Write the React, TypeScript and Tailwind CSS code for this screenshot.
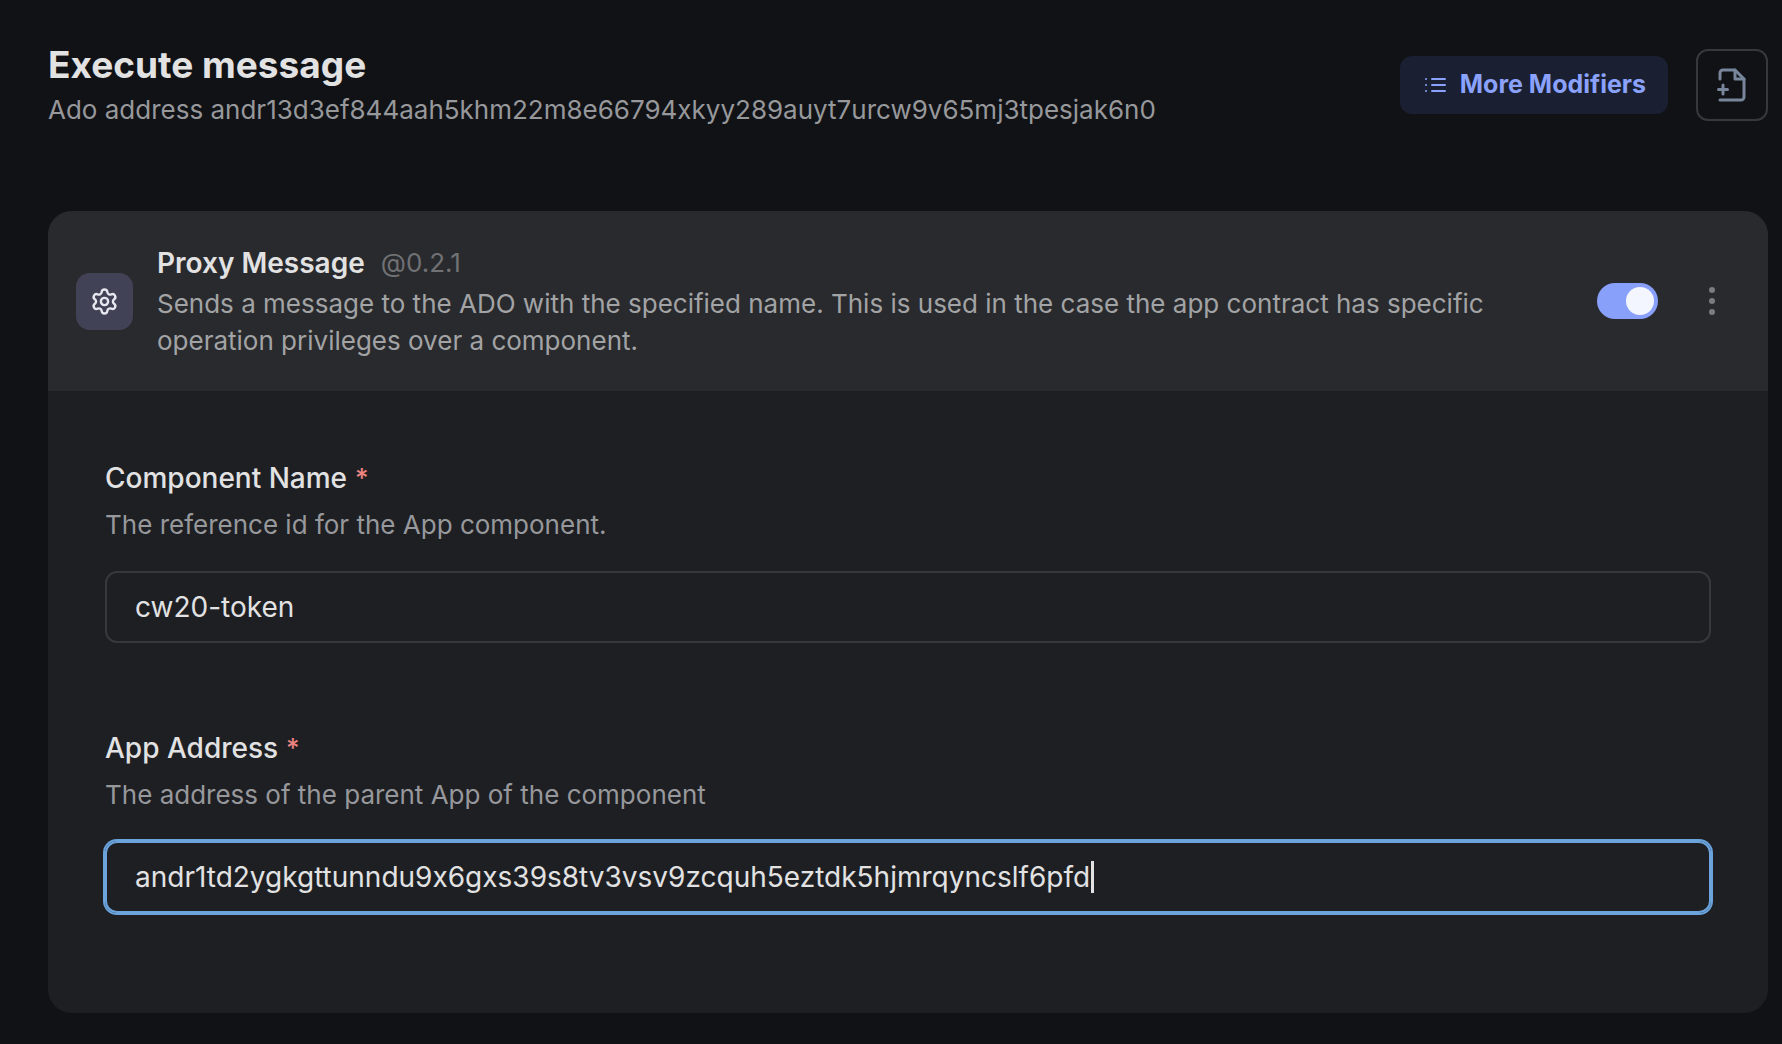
import React, { useEffect, useRef, useState } from "react";

const GearIcon = () => (
  <svg className="size-[29px]" viewBox="0 0 24 24" fill="none" stroke="currentColor" strokeWidth="2" strokeLinecap="round" strokeLinejoin="round" aria-hidden="true">
    <path d="M9.67 4.14a2.34 2.34 0 0 1 4.66 0 2.34 2.34 0 0 0 3.32 1.92 2.34 2.34 0 0 1 2.33 4.03 2.34 2.34 0 0 0 0 3.83 2.34 2.34 0 0 1-2.33 4.03 2.34 2.34 0 0 0-3.32 1.92 2.34 2.34 0 0 1-4.66 0 2.34 2.34 0 0 0-3.32-1.92 2.34 2.34 0 0 1-2.33-4.03 2.34 2.34 0 0 0 0-3.83 2.34 2.34 0 0 1 2.33-4.03 2.34 2.34 0 0 0 3.32-1.92" />
    <circle cx="12" cy="12" r="3" />
  </svg>
);

const FilePlusIcon = () => (
  <svg className="size-9" viewBox="0 0 24 24" fill="none" stroke="currentColor" strokeWidth="2" strokeLinecap="round" strokeLinejoin="round" aria-hidden="true">
    <path d="M4 22h14a2 2 0 0 0 2-2V8l-6-6H6a2 2 0 0 0-2 2v4" />
    <path d="M14 2v6h6" />
    <path d="M3 15h6M6 12v6" />
  </svg>
);

const ListIcon = () => (
  <svg className="size-6" viewBox="0 0 24 24" fill="none" stroke="currentColor" strokeWidth="2" strokeLinecap="round" aria-hidden="true">
    <path d="M10 6h13M10 12h13M10 18h13M4 6h.01M4 12h.01M4 18h.01" />
  </svg>
);

type FieldProps = {
  id: string;
  label: string;
  hint: string;
  initial: string;
  focused?: boolean;
};

function Field({ id, label, hint, initial, focused = false }: FieldProps) {
  const [value, setValue] = useState(initial);
  const [active, setActive] = useState(focused);
  const [caretX, setCaretX] = useState(0);
  const ref = useRef<HTMLInputElement>(null);

  const placeCaret = () => {
    const input = ref.current;
    const ctx = document.createElement("canvas").getContext("2d");
    if (!input || !ctx) return;
    const style = getComputedStyle(input);
    ctx.font = `${style.fontWeight} ${style.fontSize} ${style.fontFamily}`;
    const before = input.value.slice(0, input.selectionEnd ?? input.value.length);
    setCaretX(Math.round(ctx.measureText(before).width + parseFloat(style.paddingLeft) - input.scrollLeft));
  };

  useEffect(() => {
    if (focused && ref.current) {
      ref.current.focus();
      ref.current.setSelectionRange(initial.length, initial.length);
      placeCaret();
    }
  }, [focused, initial]);

  return (
    <div>
      <label htmlFor={id} className="flex gap-2 text-[28px] leading-9 font-medium text-[#e2e2e3]">
        {label}
        <span className="text-[26px] text-[#ee8481]">*</span>
      </label>
      <p id={`${id}-hint`} className="mt-[11px] text-[26px] leading-9 text-[#97989b]">{hint}</p>
      <div className="relative mt-7">
        <input
          id={id}
          ref={ref}
          type="text"
          required
          spellCheck={false}
          aria-describedby={`${id}-hint`}
          value={value}
          onChange={(e) => setValue(e.target.value)}
          onSelect={placeCaret}
          onFocus={() => setActive(true)}
          onBlur={() => setActive(false)}
          className="block h-[72px] w-full rounded-xl border-2 border-[#37383c] bg-transparent px-7 text-[28px] text-[#e2e2e3] caret-transparent outline-none focus:border-[#6ba3dc] focus:ring-2 focus:ring-[#6ba3dc]"
        />
        {active && caretX > 0 && (
          <span aria-hidden="true" className="pointer-events-none absolute top-5 h-8 w-[3px] bg-[#e2e2e3]" style={{ left: caretX }} />
        )}
      </div>
    </div>
  );
}

export default function App() {
  const [enabled, setEnabled] = useState(true);
  return (
    <div className="min-h-screen bg-[#111216] pt-10 pr-[14px] pb-7 pl-12 font-['Inter',sans-serif] [font-feature-settings:'calt'_0]">
      <header className="flex items-start justify-between">
        <div>
          <h1 className="text-[37px] leading-[50px] font-bold text-[#e2e2e3]">Execute message</h1>
          <p className="text-[26px] leading-10 text-[#97989b]">
            Ado address andr13d3ef844aah5khm22m8e66794xkyy289auyt7urcw9v65mj3tpesjak6n0
          </p>
        </div>
        <div className="mt-[9px] flex items-center gap-7">
          <button type="button" className="flex h-[58px] items-center gap-[14px] rounded-xl bg-[#1a2031] px-[22px] text-[25px] font-bold text-[#8aa2fb]">
            <ListIcon />
            More Modifiers
          </button>
          <button type="button" aria-label="Import file" className="flex size-[72px] items-center justify-center rounded-xl border-2 border-[#37383c] text-[#77869a]">
            <FilePlusIcon />
          </button>
        </div>
      </header>

      <section className="mt-[81px] overflow-hidden rounded-3xl bg-[#1e1f23]">
        <div className="flex items-center bg-[#292a2d] py-8 pr-9 pl-7">
          <div className="flex size-[57px] shrink-0 items-center justify-center rounded-[14px] bg-[#414256] text-[#e6e7ee]">
            <GearIcon />
          </div>
          <div className="ml-6 min-w-0 flex-1">
            <div className="flex items-center gap-4">
              <h2 className="text-[28px] leading-10 font-semibold text-[#e2e2e3]">Proxy Message</h2>
              <span className="text-[26px] leading-10 text-[#707174]">@0.2.1</span>
            </div>
            <p className="mt-[2px] max-w-[1360px] text-[26px] leading-[37px] text-[#a2a3a5]">
              Sends a message to the ADO with the specified name. This is used in the case the app contract has specific operation privileges over a component.
            </p>
          </div>
          <label className="relative ml-6 h-9 w-[61px] shrink-0 cursor-pointer">
            <input
              type="checkbox"
              role="switch"
              aria-label="Enable Proxy Message"
              checked={enabled}
              onChange={(e) => setEnabled(e.target.checked)}
              className="peer block h-9 w-full appearance-none rounded-full bg-[#4b4c50] checked:bg-[#88a0fa]"
            />
            <span className="pointer-events-none absolute top-1 left-1 size-7 rounded-full bg-[#f3f5ff] peer-checked:right-1 peer-checked:left-auto" />
          </label>
          <button type="button" aria-label="More options" className="ml-[34px] flex h-10 w-10 flex-col items-center justify-center gap-[5px]">
            <span className="size-[6px] rounded-full bg-[#7b7c7f]" />
            <span className="size-[6px] rounded-full bg-[#7b7c7f]" />
            <span className="size-[6px] rounded-full bg-[#7b7c7f]" />
          </button>
        </div>
        <form className="flex flex-col gap-[87px] px-[57px] pt-[69px] pb-[100px]">
          <Field id="component-name" label="Component Name" hint="The reference id for the App component." initial="cw20-token" />
          <Field
            id="app-address"
            label="App Address"
            hint="The address of the parent App of the component"
            initial="andr1td2ygkgttunndu9x6gxs39s8tv3vsv9zcquh5eztdk5hjmrqyncslf6pfd"
            focused
          />
        </form>
      </section>
    </div>
  );
}
